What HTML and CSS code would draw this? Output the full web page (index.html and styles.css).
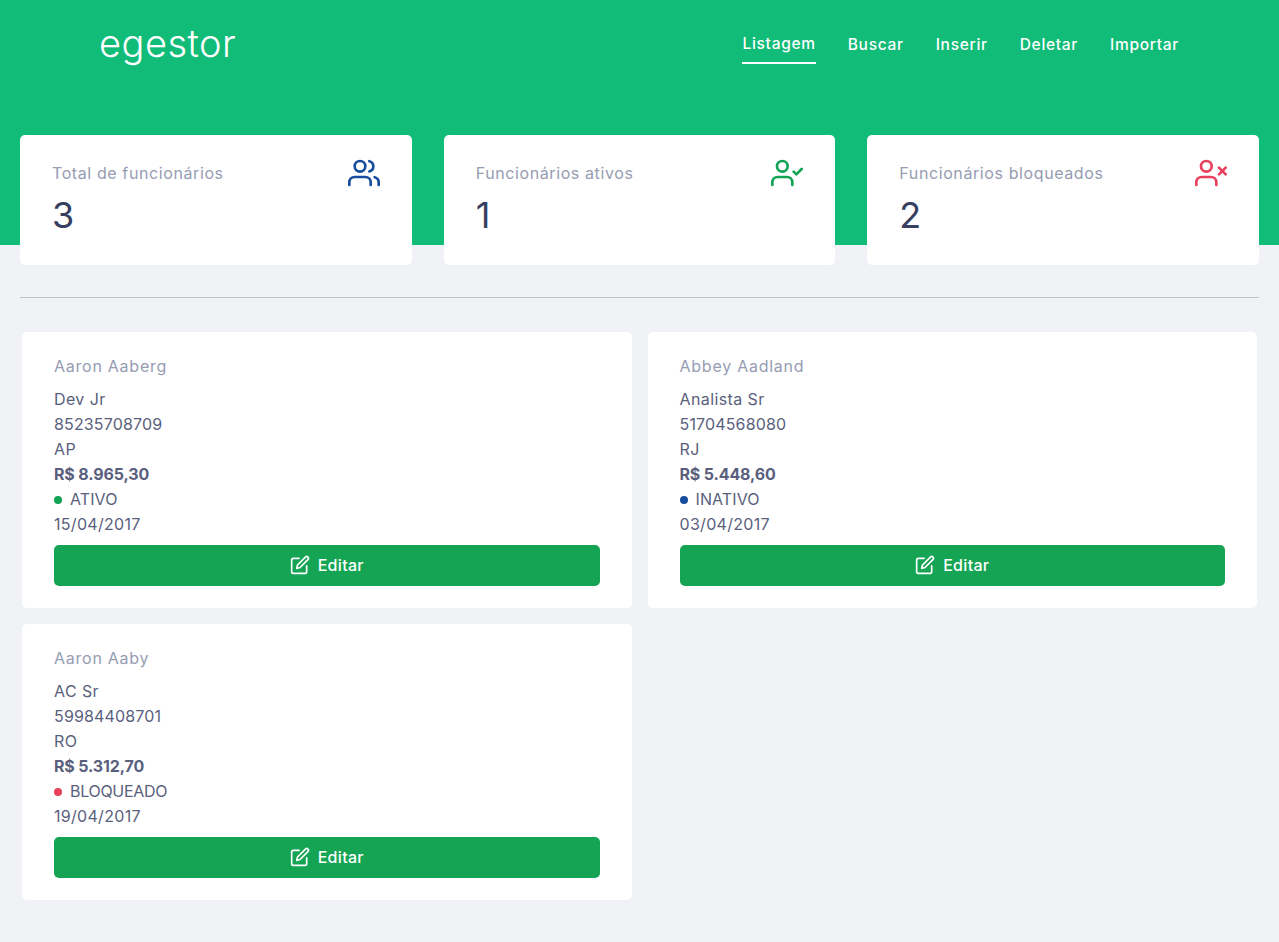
FILE: index.html
```html
<!DOCTYPE html>
<html lang="pt-BR">
<head>
<meta charset="utf-8">
<title>egestor</title>
<link rel="stylesheet" href="styles.css">
</head>
<body>
<svg class="sprites" width="0" height="0" aria-hidden="true">
  <symbol id="i-users" viewBox="0 0 24 24"><path d="M17 21v-2a4 4 0 0 0-4-4H5a4 4 0 0 0-4 4v2"/><circle cx="9" cy="7" r="4"/><path d="M23 21v-2a4 4 0 0 0-3-3.87"/><path d="M16 3.13a4 4 0 0 1 0 7.75"/></symbol>
  <symbol id="i-check" viewBox="0 0 24 24"><path d="M16 21v-2a4 4 0 0 0-4-4H5a4 4 0 0 0-4 4v2"/><circle cx="8.5" cy="7" r="4"/><polyline points="17 11 19 13 23 9"/></symbol>
  <symbol id="i-x" viewBox="0 0 24 24"><path d="M16 21v-2a4 4 0 0 0-4-4H5a4 4 0 0 0-4 4v2"/><circle cx="8.5" cy="7" r="4"/><line x1="18" y1="8" x2="23" y2="13"/><line x1="23" y1="8" x2="18" y2="13"/></symbol>
  <symbol id="i-edit" viewBox="0 0 24 24"><path d="M11 4H4a2 2 0 0 0-2 2v14a2 2 0 0 0 2 2h14a2 2 0 0 0 2-2v-7"/><path d="M18.5 2.5a2.121 2.121 0 0 1 3 3L12 15l-4 1 1-4 9.5-9.5z"/></symbol>
</svg>

<header class="topbar">
  <div class="logo">egestor</div>
  <nav class="nav">
    <a class="nav-link active">Listagem</a>
    <a class="nav-link">Buscar</a>
    <a class="nav-link">Inserir</a>
    <a class="nav-link">Deletar</a>
    <a class="nav-link">Importar</a>
  </nav>
</header>

<main class="content">
  <section class="summary">
    <div class="stat">
      <div class="stat-text"><p class="stat-label">Total de funcionários</p><p class="stat-value">3</p></div>
      <svg class="stat-icon blue"><use href="#i-users"/></svg>
    </div>
    <div class="stat">
      <div class="stat-text"><p class="stat-label">Funcionários ativos</p><p class="stat-value">1</p></div>
      <svg class="stat-icon green"><use href="#i-check"/></svg>
    </div>
    <div class="stat">
      <div class="stat-text"><p class="stat-label">Funcionários bloqueados</p><p class="stat-value">2</p></div>
      <svg class="stat-icon red"><use href="#i-x"/></svg>
    </div>
  </section>

  <hr class="divider">

  <section class="employees">
    <article class="employee">
      <h2 class="emp-name">Aaron Aaberg</h2>
      <p class="emp-line">Dev Jr</p>
      <p class="emp-line num">85235708709</p>
      <p class="emp-line">AP</p>
      <p class="emp-line salary">R$ 8.965,30</p>
      <p class="emp-line status"><span class="dot bg-green"></span>ATIVO</p>
      <p class="emp-line date">15/04/2017</p>
      <button class="edit-btn"><svg class="edit-icon"><use href="#i-edit"/></svg>Editar</button>
    </article>
    <article class="employee">
      <h2 class="emp-name">Abbey Aadland</h2>
      <p class="emp-line">Analista Sr</p>
      <p class="emp-line num">51704568080</p>
      <p class="emp-line">RJ</p>
      <p class="emp-line salary">R$ 5.448,60</p>
      <p class="emp-line status"><span class="dot bg-blue"></span>INATIVO</p>
      <p class="emp-line date">03/04/2017</p>
      <button class="edit-btn"><svg class="edit-icon"><use href="#i-edit"/></svg>Editar</button>
    </article>
    <article class="employee">
      <h2 class="emp-name">Aaron Aaby</h2>
      <p class="emp-line">AC Sr</p>
      <p class="emp-line num">59984408701</p>
      <p class="emp-line">RO</p>
      <p class="emp-line salary">R$ 5.312,70</p>
      <p class="emp-line status blocked"><span class="dot bg-red"></span>BLOQUEADO</p>
      <p class="emp-line date">19/04/2017</p>
      <button class="edit-btn"><svg class="edit-icon"><use href="#i-edit"/></svg>Editar</button>
    </article>
  </section>
</main>
</body>
</html>
```
FILE: styles.css
```css
* { box-sizing: border-box; }
html, body { margin: 0; padding: 0; }
body {
  background: #f0f2f5;
  font-family: "Inter", "Liberation Sans", sans-serif;
  color: #5a5f7d;
  min-height: 942px;
}
.sprites { position: absolute; }
svg { fill: none; stroke: currentColor; stroke-width: 2; stroke-linecap: round; stroke-linejoin: round; }

.topbar {
  height: 245px;
  background: #11bb78;
  color: #fff;
  display: flex;
  justify-content: space-between;
  align-items: flex-start;
  padding: 0 100px;
}
.logo { font-size: 38px; font-weight: 300; line-height: 44px; margin: 21px 0 0 -1px; letter-spacing: 0.5px; }
.nav { display: flex; gap: 32px; margin-top: 34px; }
.nav-link { font-size: 15.5px; font-weight: 500; line-height: 22px; letter-spacing: 0.7px; padding-bottom: 7px; }
.nav-link.active { border-bottom: 2px solid #fff; margin-top: -1px; height: 31px; }

.content { padding: 0 20px; margin-top: -110px; }
.summary { display: grid; grid-template-columns: repeat(3, 1fr); gap: 32px; }
.stat {
  height: 130px;
  background: #fff;
  border-radius: 5px;
  padding: 22px 32px;
  display: flex;
  justify-content: space-between;
  align-items: flex-start;
}
.stat-label { margin: 4px 0 0; font-size: 16px; line-height: 24px; letter-spacing: 0.6px; color: #969cb2; }
.stat-value { margin: 8px 0 0; font-size: 36px; line-height: 44px; color: #363f5f; }
.stat-icon { width: 32px; height: 32px; }
.blue { color: #174d9e; }
.green { color: #12a454; }
.red { color: #e83f5b; }

.divider { border: 0; height: 1px; background: #c2c4cc; margin: 32px 0 34px; }

.employees { display: grid; grid-template-columns: 1fr 1fr; gap: 16px; padding: 0 2px; }
.employee { background: #fff; border-radius: 5px; padding: 22px 32px; }
.emp-name { margin: 0 0 8px; font-size: 16px; font-weight: 400; line-height: 25px; letter-spacing: 0.75px; color: #969cb2; }
.emp-line { margin: 0; font-size: 16px; line-height: 25px; letter-spacing: 0.4px; color: #5a5f7d; }
.num { letter-spacing: 0.15px; }
.date { letter-spacing: 0.3px; }
.salary { font-weight: 700; letter-spacing: -0.15px; }
.status { display: flex; align-items: center; letter-spacing: 0.1px; }
.status.blocked { letter-spacing: -0.3px; }
.dot { width: 8px; height: 8px; border-radius: 50%; margin-right: 8px; }
.bg-green { background: #12a454; }
.bg-blue { background: #174d9e; }
.bg-red { background: #e83f5b; }

.edit-btn {
  width: 100%;
  height: 41px;
  margin-top: 8px;
  display: flex;
  align-items: center;
  justify-content: center;
  gap: 8px;
  background: #14a454;
  color: #fff;
  border: 0;
  border-radius: 5px;
  font: 500 16px/22px "Inter", "Liberation Sans", sans-serif;
  letter-spacing: 0.3px;
  padding: 0 0 1px;
}
.edit-icon { width: 20px; height: 20px; }
```
